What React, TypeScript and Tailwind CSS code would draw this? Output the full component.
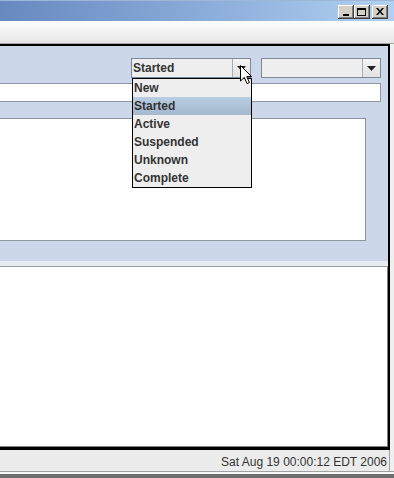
import React from "react"

const font = "font-['Liberation_Sans',Arial,sans-serif]"

const winBtn =
  "w-[16px] h-[14px] bg-[#d4d0c8] shadow-[inset_-1px_-1px_#404040,inset_1px_1px_#ffffff,inset_-2px_-2px_#808080] flex items-center justify-center"

const TitleButtons: React.FC = () => (
  <div className="flex items-start">
    <div className={winBtn}>
      <div className="w-[6px] h-[2px] bg-black mt-[6px] mr-[1px]" />
    </div>
    <div className={winBtn}>
      <div className="w-[9px] h-[8px] border border-black border-t-2 mb-[1px] mr-[1px]" />
    </div>
    <div className={`${winBtn} ml-[2px]`}>
      <svg width="8" height="7" viewBox="0 0 8 7" className="mb-[1px] mr-[1px]">
        <path d="M0 0 L2 0 L4 2.5 L6 0 L8 0 L5 3.5 L8 7 L6 7 L4 4.5 L2 7 L0 7 L3 3.5 Z" fill="#000" />
      </svg>
    </div>
  </div>
)

const ComboBox: React.FC<{ value?: string }> = ({ value }) => (
  <div className="w-[120px] h-[20px] border border-[#7a8a99] bg-[#eeeeee] flex">
    <div className="flex-1 flex items-center pl-[1px] text-[12px] font-bold text-[#333333] leading-none">
      {value}
    </div>
    <div className="w-[18px] border-l border-[#a3b0bc] bg-gradient-to-b from-[#f4f4f4] to-[#e2e2e2] flex items-center justify-center">
      <svg width="9" height="5" viewBox="0 0 9 5">
        <path d="M0 0 L9 0 L4.5 5 Z" fill="#222" />
      </svg>
    </div>
  </div>
)

const items = ["New", "Started", "Active", "Suspended", "Unknown", "Complete"]

export default function App() {
  return (
    <div className={`relative w-[394px] h-[478px] overflow-hidden bg-[#f0f0f0] flex flex-col ${font}`}>
      {/* title bar */}
      <div className="h-[21px] bg-gradient-to-r from-[#6889c0] via-[#8aaad8] to-[#b2d1f2] flex justify-end pt-[4px] pr-[6px] border-t border-[#9fb6d8]">
        <TitleButtons />
      </div>
      {/* tool bar strip */}
      <div className="h-[23px] bg-gradient-to-b from-[#fdfdfd] to-[#e6e6e6] border-b border-[#a8a8a8]" />
      {/* main frame */}
      <div className="h-[406px] mr-[4px] border-t-2 border-r-2 border-b-[3px] border-black flex flex-col">
        {/* form panel */}
        <div className="h-[215px] bg-[#ccd8e9] flex flex-col pt-[12px]">
          <div className="flex justify-end gap-[10px] pr-[7px]">
            <ComboBox value="Started" />
            <ComboBox />
          </div>
          <div className="mt-[5px] mr-[7px] h-[19px] bg-white border-t border-r border-b border-[#8d96a0]" />
          <div className="mt-[16px] mr-[22px] h-[123px] bg-white border-t border-r border-b border-[#8d96a0]" />
        </div>
        {/* split divider */}
        <div className="h-[5px] bg-[#e6ecf4]" />
        <div className="h-px bg-[#9a9a9a]" />
        {/* lower pane */}
        <div className="h-[180px] bg-white border-b border-r border-[#808080]" />
      </div>
      {/* status bar */}
      <div className="h-[21px] bg-[#ececec] flex items-center justify-end pr-[2px] mr-[4px] border-r border-[#a0a0a0]">
        <span className="text-[12px] text-[#333333] leading-none mt-[3px]">Sat Aug 19 00:00:12 EDT 2006</span>
      </div>
      <div className="h-px bg-[#a0a0a0]" />
      <div className="h-[2px] bg-[#f8f8f8]" />
      <div className="flex-1 bg-[#6e6e6e]" />

      {/* popup list */}
      <div className="absolute left-[132px] top-[78px] w-[120px] border border-black bg-[#eeeeee] flex flex-col">
        {items.map((item) => (
          <div
            key={item}
            className={`h-[18px] flex items-center pl-[1px] text-[12px] font-bold text-[#333333] leading-none ${
              item === "Started" ? "bg-gradient-to-b from-[#b9cde2] to-[#a3b8ce]" : ""
            }`}
          >
            {item}
          </div>
        ))}
      </div>

      {/* mouse pointer */}
      <svg className="absolute left-[240px] top-[65px]" width="13" height="20" viewBox="0 0 13 20">
        <path
          d="M0.5 0.5 L0.5 16 L4.3 12.4 L7 18.6 L9.4 17.6 L6.8 11.6 L11.6 11.6 Z"
          fill="#fff"
          stroke="#000"
          strokeWidth="1"
          strokeLinejoin="miter"
        />
      </svg>
    </div>
  )
}
